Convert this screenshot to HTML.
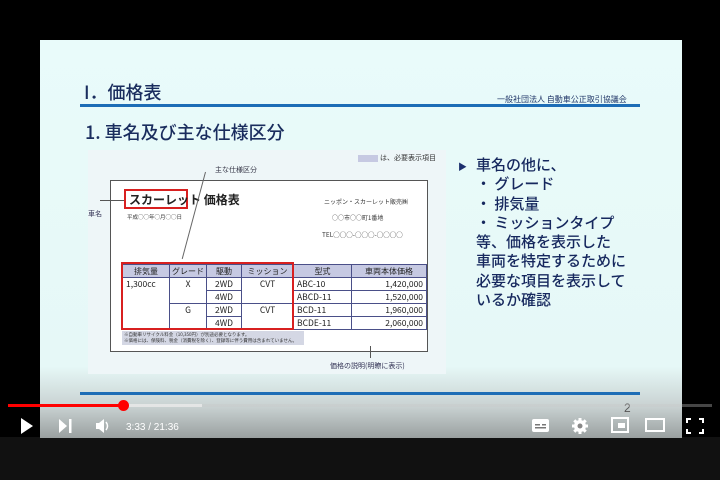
<!DOCTYPE html>
<html><head><meta charset="utf-8"><style>
*{margin:0;padding:0;box-sizing:border-box}
body{width:720px;height:480px;background:#000;position:relative;overflow:hidden;font-family:"Liberation Sans","Noto Sans CJK JP",sans-serif}
.a{position:absolute}
.slide{left:40px;top:40px;width:642px;height:398px;background:linear-gradient(#e9fbfa 0%,#e6f8f7 82%,#c9d2d2 92%,#9aa0a0 100%)}
.jp{font-family:"Noto Sans CJK JP",sans-serif}
table{border-collapse:collapse;font-size:8.5px;color:#222}
td{border:1px solid #4a4f88;height:13px;padding:0 3px}
th{border:1px solid #4a4f88;background:#c6c9e2;font-weight:normal;height:13px;font-size:8px}
.bl{color:#16285e;font-size:15px;line-height:19.3px;font-weight:500}
</style></head><body>
<div class="a" style="left:0;top:437px;width:720px;height:43px;background:#111"></div>
<div class="a slide"></div>
<div class="a jp" style="left:84px;top:79px;font-size:18px;color:#1a2d5e;font-weight:500">I．価格表</div>
<div class="a jp" style="left:497px;top:94px;font-size:8px;color:#1f3568">一般社団法人 自動車公正取引協議会</div>
<div class="a" style="left:80px;top:104px;width:560px;height:3px;background:#1d6db6"></div>
<div class="a jp" style="left:85px;top:119px;font-size:18px;color:#1a2d5e;font-weight:500">1. 車名及び主な仕様区分</div>
<div class="a" style="left:88px;top:150px;width:358px;height:224px;background:#eef6f8"></div>
<div class="a" style="left:358px;top:155px;width:20px;height:7px;background:#c6c9e2"></div>
<div class="a jp" style="left:380px;top:153px;font-size:7px;color:#333">は、必要表示項目</div>
<div class="a jp" style="left:215px;top:165px;font-size:7px;color:#334">主な仕様区分</div>
<div class="a" style="left:110px;top:180px;width:318px;height:172px;border:1.5px solid #555;background:#fff"></div>
<div class="a" style="left:124px;top:189px;width:64px;height:20px;border:2.5px solid #d82020"></div>
<div class="a jp" style="left:129px;top:191px;font-size:12px;font-weight:bold;color:#222">スカーレット 価格表</div>
<div class="a jp" style="left:88px;top:209px;font-size:7px;color:#335">車名</div>
<div class="a" style="left:100px;top:200px;width:24px;height:1px;background:#555"></div>
<div class="a jp" style="left:127px;top:213px;font-size:5.5px;color:#333">平成○○年○月○○日</div>
<div class="a jp" style="left:324px;top:197px;font-size:6px;color:#333">ニッポン・スカーレット販売㈱</div>
<div class="a jp" style="left:332px;top:213px;font-size:6px;color:#333">○○市○○町1番地</div>
<div class="a jp" style="left:322px;top:229px;font-size:6.5px;color:#333">TEL○○○-○○○-○○○○</div>
<div class="a" style="left:205px;top:172px;width:1px;height:90px;background:#666;transform:rotate(15deg);transform-origin:top"></div>
<table class="a jp" style="left:122px;top:264px;width:305px">
<tr><th style="width:47px">排気量</th><th style="width:37px">グレード</th><th style="width:35px">駆動</th><th style="width:52px">ミッション</th><th style="width:58px">型式</th><th>車両本体価格</th></tr>
<tr><td rowspan="4" style="vertical-align:top">1,300cc</td><td rowspan="2" style="vertical-align:top;text-align:center">X</td><td style="text-align:center">2WD</td><td rowspan="2" style="vertical-align:top;text-align:center">CVT</td><td>ABC-10</td><td style="text-align:right">1,420,000</td></tr>
<tr><td style="text-align:center">4WD</td><td>ABCD-11</td><td style="text-align:right">1,520,000</td></tr>
<tr><td rowspan="2" style="vertical-align:top;text-align:center">G</td><td style="text-align:center">2WD</td><td rowspan="2" style="vertical-align:top;text-align:center">CVT</td><td>BCD-11</td><td style="text-align:right">1,960,000</td></tr>
<tr><td style="text-align:center">4WD</td><td>BCDE-11</td><td style="text-align:right">2,060,000</td></tr>
</table>
<div class="a" style="left:121px;top:262px;width:173px;height:68px;border:2.5px solid #d82020"></div>
<div class="a" style="left:122px;top:331px;width:182px;height:14px;background:#d4d7e4"></div>
<div class="a jp" style="left:124px;top:332px;font-size:4.5px;color:#333;line-height:6px">※自動車リサイクル料金（10,350円）が別途必要となります。<br>※価格には、保険料、税金（消費税を除く）、登録等に伴う費用は含まれていません。</div>
<div class="a" style="left:370px;top:346px;width:1px;height:12px;background:#555"></div>
<div class="a jp" style="left:330px;top:361px;font-size:7px;color:#335">価格の説明(明瞭に表示)</div>
<div class="a" style="left:458px;top:160px;font-size:9px;color:#1c2f6e">▶</div>
<div class="a jp bl" style="left:476px;top:155px">車名の他に、<br>・ グレード<br>・ 排気量<br>・ ミッションタイプ<br>等、価格を表示した<br>車両を特定するために<br>必要な項目を表示して<br>いるか確認</div>
<div class="a" style="left:80px;top:392px;width:560px;height:3px;background:#1d6db6"></div>
<div class="a" style="left:624px;top:401px;font-size:12px;color:#555">2</div>
<div class="a" style="left:8px;top:404px;width:704px;height:3px;background:rgba(200,200,200,.35)"></div>
<div class="a" style="left:8px;top:404px;width:194px;height:3px;background:rgba(240,240,240,.7)"></div>
<div class="a" style="left:8px;top:404px;width:115px;height:3px;background:#f00"></div>
<div class="a" style="left:118px;top:400px;width:11px;height:11px;border-radius:50%;background:#f00"></div>
<svg class="a" style="left:0;top:414px" width="720" height="24" fill="#fff">
<path d="M21 4 L33 12 L21 20Z"/>
<path d="M59 5 L67 12 L59 19Z"/><rect x="69" y="5" width="2.5" height="14"/>
<path d="M96 9h3l5-4v14l-5-4h-3z"/><path d="M106 8q3 4 0 8" stroke="#fff" stroke-width="1.5" fill="none"/>
<text x="126" y="16" font-size="10" font-family="Liberation Sans">3:33 / 21:36</text>
<rect x="532" y="5" width="17" height="13" rx="2"/><rect x="535" y="10" width="5" height="1.5" fill="#777"/><rect x="542" y="10" width="4" height="1.5" fill="#777"/><rect x="535" y="13" width="11" height="1.5" fill="#777"/>
<circle cx="580" cy="12" r="6"/><path d="M580 4v16M572 12h16M574.3 6.3l11.4 11.4M585.7 6.3l-11.4 11.4" stroke="#fff" stroke-width="3"/><circle cx="580" cy="12" r="2.5" fill="#888"/>
<rect x="612" y="4" width="16" height="14" fill="none" stroke="#fff" stroke-width="2"/><rect x="618" y="9" width="7" height="5"/>
<rect x="646" y="5" width="18" height="12" fill="none" stroke="#fff" stroke-width="2"/>
<path d="M687 9V5h4M699 5h4v4M703 15v4h-4M691 19h-4v-4" stroke="#fff" stroke-width="2" fill="none"/>
</svg>
</body></html>
